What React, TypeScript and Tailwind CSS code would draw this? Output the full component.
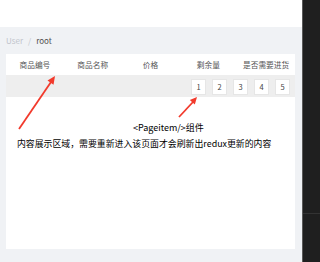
import React from "react";

const cols = ["商品编号", "商品名称", "价格", "剩余量", "是否需要进货"];

export default function App() {
  const font = { fontFamily: '"Noto Sans CJK SC", "Noto Sans", sans-serif' };
  return (
    <div className="relative flex w-[320px] h-[262px] overflow-hidden" style={font}>
      <div className="flex flex-col w-[302px] h-full bg-[#f0f2f5]">
        <div className="h-[27px] bg-white" />
        <div className="flex flex-col flex-1 pl-[6px] pr-[7px]">
          <div className="h-[27px] flex items-center text-[8px] leading-none">
            <span className="text-[#c0c4cc]">User</span>
            <span className="text-[#c0c4cc] mx-[5px]">/</span>
            <span className="text-[#505050]">root</span>
          </div>
          <div className="h-[21px] bg-white grid grid-cols-5 items-center text-[7.7px] text-[#555] leading-none">
            {cols.map((c) => (
              <div key={c} className="text-center">{c}</div>
            ))}
          </div>
          <div className="h-[22px] bg-[#eeeeee] flex items-center justify-end pr-[5px] gap-[6px] pt-[1px]">
            {[1, 2, 3, 4, 5].map((n) => (
              <div
                key={n}
                className="w-[15px] h-[16px] bg-white border border-[#e6e6e6] flex items-center justify-center text-[7.5px] text-[#444] leading-none"
              >
                {n}
              </div>
            ))}
          </div>
          <div className="h-[152px] bg-white pt-[26px] text-black leading-none">
            <div className="ml-[127px] text-[9px]">&lt;Pageitem/&gt;组件</div>
            <div className="ml-[11px] mt-[8px] text-[8.9px] whitespace-nowrap">
              内容展示区域，需要重新进入该页面才会刷新出redux更新的内容
            </div>
          </div>
        </div>
      </div>
      <div className="w-[1px] h-full bg-[#5a5a5a]" />
      <div className="flex-1 h-full bg-[#1f1f1f] flex flex-col">
        <div className="h-[213px]" />
        <div className="h-[1px] bg-[#333333]" />
      </div>
      <svg className="absolute inset-0 pointer-events-none" width="320" height="262">
        <line x1="19" y1="129" x2="51" y2="82" stroke="#f23a2c" strokeWidth="1.8" />
        <polygon points="55,76 53.5,84.8 47.5,80.6" fill="#f23a2c" />
        <line x1="179" y1="117" x2="193" y2="102" stroke="#f23a2c" strokeWidth="1.8" />
        <polygon points="197,97 194.8,104.6 189.8,100" fill="#f23a2c" />
      </svg>
    </div>
  );
}
